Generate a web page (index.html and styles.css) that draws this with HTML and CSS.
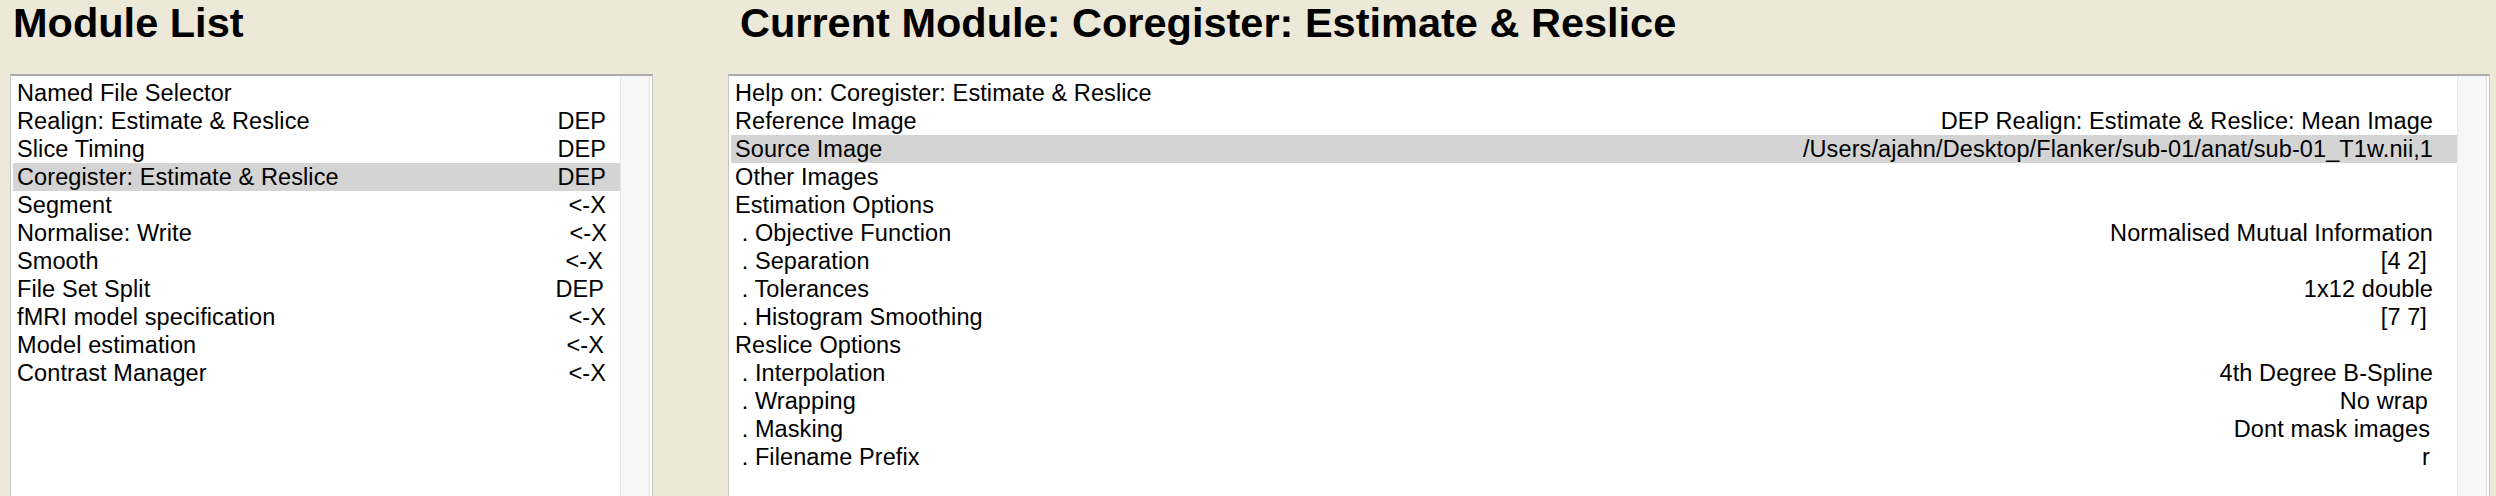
FILE: index.html
```html
<!DOCTYPE html>
<html lang="en">
<head>
<meta charset="utf-8">
<title>Batch Editor</title>
<link rel="stylesheet" href="styles.css">
</head>
<body>
<div class="app">
  <section class="col">
    <h1 class="title title-left">Module List</h1>
    <div class="box">
      <ul class="list list-left">
        <li class="row"><span>Named File Selector</span><span></span></li>
        <li class="row"><span>Realign: Estimate &amp; Reslice</span><span>DEP</span></li>
        <li class="row"><span>Slice Timing</span><span>DEP</span></li>
        <li class="row sel"><span>Coregister: Estimate &amp; Reslice</span><span>DEP</span></li>
        <li class="row"><span>Segment</span><span>&lt;-X</span></li>
        <li class="row"><span>Normalise: Write</span><span class="push">&lt;-X</span></li>
        <li class="row"><span>Smooth</span><span class="pad5">&lt;-X</span></li>
        <li class="row"><span>File Set Split</span><span class="pad2">DEP</span></li>
        <li class="row"><span>fMRI model specification</span><span>&lt;-X</span></li>
        <li class="row"><span>Model estimation</span><span class="pad2">&lt;-X</span></li>
        <li class="row"><span>Contrast Manager</span><span>&lt;-X</span></li>
      </ul>
      <div class="scroll"></div>
    </div>
  </section>
  <section class="col">
    <h1 class="title title-right">Current Module: Coregister: Estimate &amp; Reslice</h1>
    <div class="box">
      <ul class="list list-right">
        <li class="row"><span>Help on: Coregister: Estimate &amp; Reslice</span><span></span></li>
        <li class="row"><span>Reference Image</span><span>DEP Realign: Estimate &amp; Reslice: Mean Image</span></li>
        <li class="row sel"><span>Source Image</span><span>/Users/ajahn/Desktop/Flanker/sub-01/anat/sub-01_T1w.nii,1</span></li>
        <li class="row"><span>Other Images</span><span></span></li>
        <li class="row"><span>Estimation Options</span><span></span></li>
        <li class="row"><span>&nbsp;. Objective Function</span><span class="pad4">Normalised Mutual Information</span></li>
        <li class="row"><span>&nbsp;. Separation</span><span class="pad8">[4 2]</span></li>
        <li class="row"><span>&nbsp;. Tolerances</span><span class="pad4">1x12 double</span></li>
        <li class="row"><span>&nbsp;. Histogram Smoothing</span><span class="pad8">[7 7]</span></li>
        <li class="row"><span>Reslice Options</span><span></span></li>
        <li class="row"><span>&nbsp;. Interpolation</span><span class="pad4">4th Degree B-Spline</span></li>
        <li class="row"><span>&nbsp;. Wrapping</span><span class="pad7">No wrap</span></li>
        <li class="row"><span>&nbsp;. Masking</span><span class="pad5">Dont mask images</span></li>
        <li class="row"><span>&nbsp;. Filename Prefix</span><span class="pad5">r</span></li>
      </ul>
      <div class="scroll"></div>
    </div>
  </section>
</div>
</body>
</html>
```

FILE: styles.css
```css
html, body {
  margin: 0;
  padding: 0;
  height: 496px;
  overflow: hidden;
  background: #ece9d8;
}

.app {
  display: grid;
  grid-template-columns: 643px 1762px;
  column-gap: 75px;
  padding-left: 10px;
  font-family: "Liberation Sans", Arial, sans-serif;
  color: #000;
}

.col {
  display: flex;
  flex-direction: column;
}

.title {
  margin: 0;
  height: 74px;
  padding-top: 0;
  box-sizing: border-box;
  font-size: 41.5px;
  font-weight: bold;
  line-height: 46px;
  white-space: nowrap;
}

.title-left { padding-left: 3px; }
.title-right { padding-left: 12px; }

.box {
  display: flex;
  height: 440px;
  background: #fff;
  border-top: 2px solid #acacac;
  border-left: 1px solid #c6c6c6;
  border-right: 1px solid #c6c6c6;
}

.list {
  flex: 1;
  list-style: none;
  margin: 0;
  padding: 3px 0 0 2px;
}

.row {
  display: flex;
  justify-content: space-between;
  height: 28px;
  line-height: 28px;
  font-size: 23.5px;
  letter-spacing: 0.1px;
  white-space: nowrap;
  padding-left: 4px;
}

.list-left .row { padding-right: 14px; }
.list-right .row { padding-right: 24px; }

.row.sel { background: #d4d4d4; }

.push { margin-right: -1px; }
.pad2 { margin-right: 2px; }
.pad4 { margin-right: 0; }
.pad5 { margin-right: 3px; }
.pad7 { margin-right: 5px; }
.pad8 { margin-right: 6px; }

.scroll {
  width: 28px;
  margin-right: 2px;
  background: #f6f6f6;
  border-left: 1px solid #e9e9e9;
  border-right: 1px solid #e0e0e0;
}
```
